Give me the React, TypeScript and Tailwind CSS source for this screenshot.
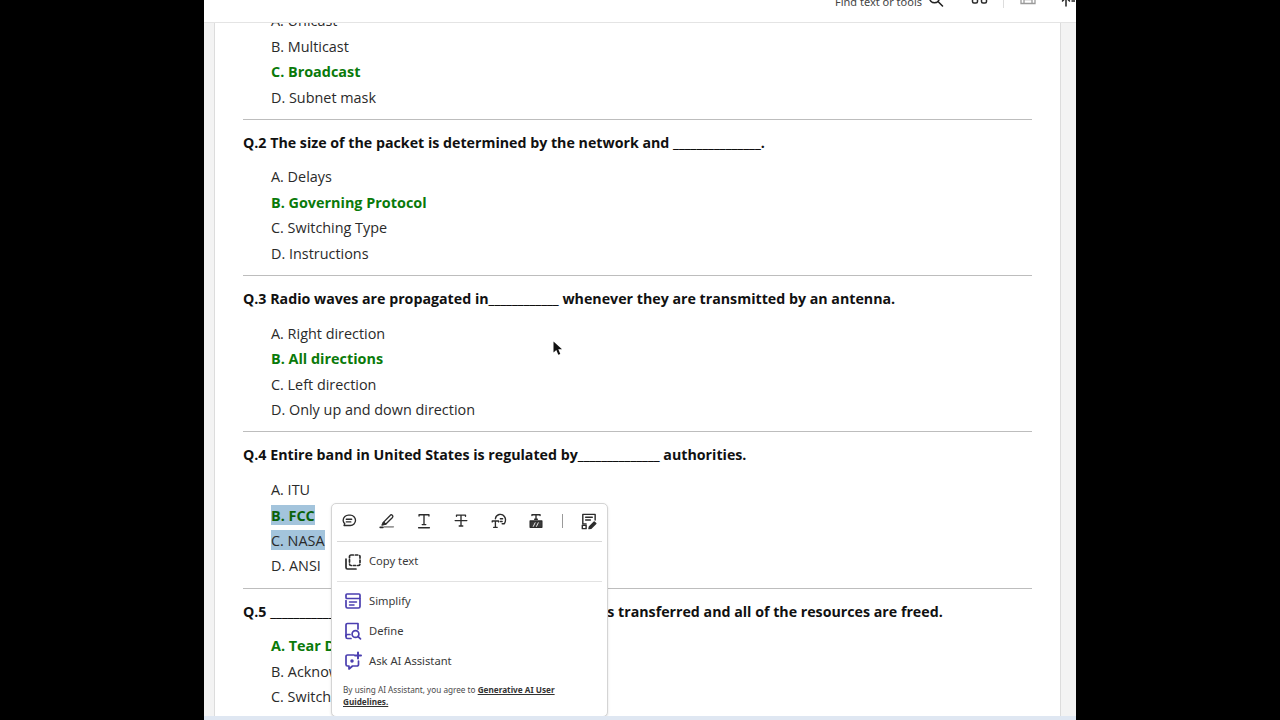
const QS = [
  { q: "", opts: ["A. Unicast", "B. Multicast", "C. Broadcast", "D. Subnet mask"], a: 2 },
  { q: "Q.2 The size of the packet is determined by the network and _______________.", opts: ["A. Delays", "B. Governing Protocol", "C. Switching Type", "D. Instructions"], a: 1 },
  { q: "Q.3 Radio waves are propagated in____________ whenever they are transmitted by an antenna.", opts: ["A. Right direction", "B. All directions", "C. Left direction", "D. Only up and down direction"], a: 1 },
  { q: "Q.4 Entire band in United States is regulated by______________ authorities.", opts: ["A. ITU", "B. FCC", "C. NASA", "D. ANSI"], a: 1 },
  { q: "Q.5 _________________ takes place when all of the data is transferred and all of the resources are freed.", opts: ["A. Tear Down", "B. Acknowledgement", "C. Switching", "D. None"], a: 0 },
];

function Sv({ children, size = 20, color = "#2c2c2c" }: { children: React.ReactNode; size?: number; color?: string }) {
  return (
    <svg width={size} height={size} viewBox="0 0 20 20" fill="none" stroke={color} strokeWidth="1.5" strokeLinecap="round" strokeLinejoin="round">
      {children}
    </svg>
  );
}

function MenuRow({ label, icon, h }: { label: string; icon: React.ReactNode; h: string }) {
  return (
    <div className={`flex items-center gap-[6px] pl-[11px] ${h}`}>
      <span className="flex w-[20px] justify-center">{icon}</span>
      <span className="text-[11.2px] text-[#3a3a3a]">{label}</span>
    </div>
  );
}

const PURPLE = "#4b3fb0";

function Popup() {
  return (
    <div
      className="absolute left-[116px] top-[480px] h-[214px] w-[277px] rounded-[5px] border border-[#d4d4d4] bg-white shadow-sm"
      style={{ fontFamily: '"Noto Sans", sans-serif' }}
    >
      <div className="mx-[5px] flex h-[38px] items-center border-b border-[#d8d8d8] pb-[3px] pl-[3px]">
        <span className="flex w-[37.5px] justify-start">
          <Sv size={18}>
            <path d="M10 3.5h1.5a5.5 5.5 0 0 1 0 11.5H4.5l.8-2A6.5 6.5 0 0 1 3.5 9.5 6 6 0 0 1 10 3.5Z" />
            <path d="M7 8h6M7 11h5" />
          </Sv>
        </span>
        <span className="flex w-[37.5px] justify-start">
          <Sv size={18}>
            <path d="M6 11.5 13.5 3.8a1.7 1.7 0 0 1 2.6 2.2L8.5 13.5Z" />
            <path d="M6 11.5l-1.5 3 4-1Z" fill="#2c2c2c" />
            <path d="M2.5 17h3" strokeWidth="2" />
            <path d="M7 16.5h10" stroke="#999" strokeWidth="1.8" />
          </Sv>
        </span>
        <span className="flex w-[37px] justify-start">
          <Sv size={18}>
            <path d="M4.5 3h11M4.5 3v1.5M15.5 3v1.5M10 3v11M8 14h4M4 17.5h12" />
          </Sv>
        </span>
        <span className="flex w-[37.5px] justify-start">
          <Sv size={18}>
            <path d="M5 3.5h10M5 3.5v1.2M15 3.5v1.2M10 3.5v11.5M8 15.5h4M3.5 9.5h13" />
          </Sv>
        </span>
        <span className="flex w-[37.5px] justify-start">
          <Sv size={18}>
            <path d="M6 7.5A5.5 5.5 0 0 1 16 5c1.4 1.8 1.5 5.2 0 8h-2.5" />
            <path d="M2.5 10h7M2.5 10v1M9.5 10v1M6 10v6M4 17h4M11.5 7.5h2.5M11.5 10.5h2" />
          </Sv>
        </span>
        <span className="flex w-[35px] justify-start">
          <Sv size={18}>
            <path d="M5.5 3h9M5.5 3v1M14.5 3v1M10 3v5M8.5 8h3" />
            <rect x="3.5" y="10" width="13" height="7" fill="#3c3c3c" />
            <path d="M7 16l2-4M10.5 16l2-4" stroke="#fff" strokeWidth="1" />
          </Sv>
        </span>
        <span className="h-[14px] w-px bg-[#9a9a9a]" />
        <span className="ml-[16px] flex">
          <Sv size={19}>
            <path d="M7.5 12.5H4V2.5h13v6" />
            <path d="M7 5.5h7M7 8.5h5" />
            <rect x="3.5" y="14" width="4" height="3.5" />
            <path d="M10.5 17.5l.5-2 5-5 1.7 1.7-5 5Z" fill="#2c2c2c" />
          </Sv>
        </span>
      </div>
      <div className="mx-[5px] border-b border-[#e2e2e2]">
        <div className="-mx-[5px]">
          <MenuRow
            label="Copy text"
            h="h-[39px]"
            icon={
              <Sv size={20}>
                <rect x="6.5" y="3" width="10.5" height="10.5" rx="1.5" strokeDasharray="2.4 2" strokeWidth="1.7" />
                <path d="M3 7v8.5A1.5 1.5 0 0 0 4.5 17H13" strokeWidth="1.7" />
              </Sv>
            }
          />
        </div>
      </div>
      <div className="pt-[4px]">
        <MenuRow
          label="Simplify"
          h="h-[30px]"
          icon={
            <Sv size={20} color={PURPLE}>
              <rect x="3" y="3" width="14" height="4.5" rx="1" strokeWidth="1.7" />
              <path d="M3 9.5v6A1.5 1.5 0 0 0 4.5 17h11a1.5 1.5 0 0 0 1.5-1.5V7.5" strokeWidth="1.7" />
              <path d="M6.5 11h7M6.5 14h4.5" />
            </Sv>
          }
        />
        <MenuRow
          label="Define"
          h="h-[30px]"
          icon={
            <Sv size={20} color={PURPLE}>
              <path d="M8 17.5H4.5A1.5 1.5 0 0 1 3 16V4a1.5 1.5 0 0 1 1.5-1.5h10.5V8" strokeWidth="1.7" />
              <path d="M3 15a1.5 1.5 0 0 1 1.5-1.5H7" strokeWidth="1.7" />
              <circle cx="12.5" cy="13" r="3.4" strokeWidth="1.7" />
              <path d="M15 15.5l2.5 2.3" strokeWidth="1.7" />
            </Sv>
          }
        />
        <MenuRow
          label="Ask AI Assistant"
          h="h-[30px]"
          icon={
            <Sv size={20} color={PURPLE}>
              <path d="M11 4H4.5A1.5 1.5 0 0 0 3 5.5v8A1.5 1.5 0 0 0 4.5 15h1.5v3l3.5-3H14a1.5 1.5 0 0 0 1.5-1.5V10" strokeWidth="1.7" />
              <path d="M15 1.5v6M12 4.5h6" strokeWidth="2" />
              <circle cx="9" cy="10" r="1" fill={PURPLE} />
            </Sv>
          }
        />
      </div>
      <p className="pl-[11px] pt-[8px] text-[8.2px] leading-[12px] text-[#4a4a4a]">
        By using AI Assistant, you agree to{" "}
        <span className="font-bold text-[#333] underline">
          Generative AI User
          <br />
          Guidelines.
        </span>
      </p>
    </div>
  );
}

function Question({ item, index }: { item: (typeof QS)[number]; index: number }) {
  return (
    <div>
      {item.q && (
        <div className="flex h-[43.5px] items-end pb-[10.5px] text-[14.22px] font-bold leading-[20px] text-[#111]">
          <span className="whitespace-nowrap">{item.q}</span>
        </div>
      )}
      <div className="pl-[28px] pt-[1px]">
        {item.opts.map((o, i) => {
          const correct = i === item.a;
          const selected = index === 3 && (i === 1 || i === 2);
          return (
            <div key={o} className="h-[25.5px] leading-[25.5px]">
              <span className={`${correct ? "font-bold text-[#0a7a0a]" : "text-[#2a2a2a]"} ${selected ? "bg-[#a3c4dc] py-[0.5px]" : ""} ${selected && correct ? "!text-[#0a620a]" : ""}`}>
                {o}
              </span>
            </div>
          );
        })}
      </div>
      {index < 4 && <div className="mt-[8.8px] h-px bg-[#bdbdbd]" />}
    </div>
  );
}

export default function App() {
  return (
    <div className="flex h-[720px] w-[1280px] justify-center overflow-hidden bg-black" style={{ fontFamily: '"Open Sans", sans-serif' }}>
      <div className="relative flex h-full w-[872px] flex-col bg-[#f3f3f3]">
        <header className="z-10 flex h-[23px] shrink-0 items-end justify-end overflow-hidden border-b border-[#e4e4e4] bg-white pr-[1px]">
          <div className="flex items-center" style={{ fontFamily: '"Noto Sans", sans-serif' }}>
            <span className="mb-[11px] whitespace-nowrap text-[11px] leading-[14px] text-[#444]">Find text or tools</span>
            <span className="mb-[14px] ml-[5.5px]">
              <svg width="16" height="16" viewBox="0 0 16 16" fill="none" stroke="#222" strokeWidth="1.6" strokeLinecap="round">
                <circle cx="6.5" cy="6" r="4.8" />
                <path d="M10 9.5l4.5 4.5" />
              </svg>
            </span>
            <span className="ml-[27.5px] mb-[14px]">
              <svg width="18" height="12" viewBox="0 0 18 12" fill="none" stroke="#2a2a2a" strokeWidth="1.5">
                <rect x="1.5" y="-4" width="5" height="13" rx="1.5" />
                <rect x="10.5" y="-4" width="5" height="13" rx="1.5" />
              </svg>
            </span>
            <span className="ml-[14px] mb-[14px] h-[8px] w-px self-end bg-[#ddd]" />
            <span className="ml-[16px] mb-[14px]">
              <svg width="16" height="10" viewBox="0 0 16 10" fill="none" stroke="#9a9a9a" strokeWidth="1.3">
                <path d="M1 -3v11.5h14V-3" />
                <path d="M4 8.5V4.5h8v4" />
              </svg>
            </span>
            <span className="ml-[23px] mb-[13px] mr-0 w-[16px] overflow-hidden">
              <svg width="20" height="12" viewBox="0 0 20 12" fill="none" stroke="#222" strokeWidth="1.5" strokeLinecap="round">
                <path d="M7 11V3M3.5 6 7 2.5 10.5 6" />
                <path d="M1 1l3 3M13 1l-3 3M13 6h5" />
              </svg>
            </span>
          </div>
        </header>
        <div className="flex min-h-0 flex-1">
          <div className="w-[10px] shrink-0 bg-[#f3f3f3]" />
          <main className="relative min-w-0 flex-1 overflow-hidden border-x border-[#dcdcdc] bg-white">
            <div className="-mt-[16px] pl-[28px] pr-[28px] text-[14.4px]">
              {QS.map((item, i) => (
                <Question key={i} item={item} index={i} />
              ))}
            </div>
            <Popup />
          </main>
          <div className="w-[15px] shrink-0 bg-[#f3f3f3]" />
        </div>
        <div className="z-10 h-[4px] shrink-0 bg-[#dfe7f2]" />
        <div className="pointer-events-none absolute left-[349px] top-[341px]">
          <svg width="10" height="15" viewBox="0 0 10 15">
            <path d="M0.5 0.5v11l2.8-2.6 2 4.8 2-0.8-2-4.6h3.7Z" fill="#111" />
          </svg>
        </div>
      </div>
    </div>
  );
}
